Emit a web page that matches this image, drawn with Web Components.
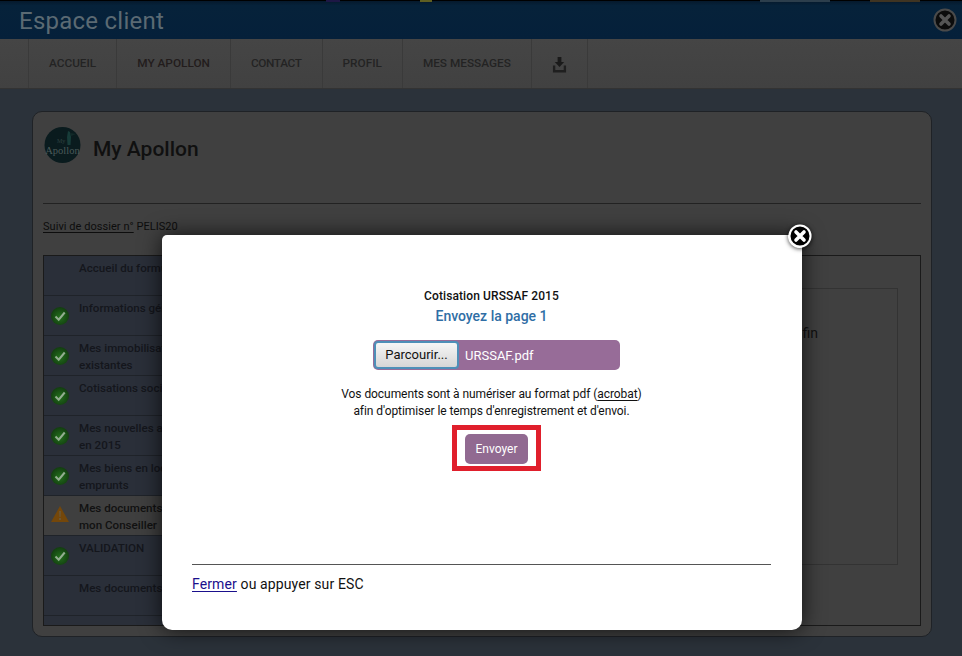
<!DOCTYPE html>
<html lang="fr">
<head>
<meta charset="utf-8">
<title>Espace client</title>
<style>
  html, body { margin: 0; height: 656px; overflow: hidden; }
  body { background: #2b323a; font: 12px/17px Roboto, "Liberation Sans", sans-serif; color: #111; position: relative; }
</style>
</head>
<body>
<client-header>Espace client</client-header>
<client-nav>
  <nav-item>ACCUEIL</nav-item>
  <nav-item active>MY APOLLON</nav-item>
  <nav-item style="letter-spacing:-.35px">CONTACT</nav-item>
  <nav-item>PROFIL</nav-item>
  <nav-item>MES MESSAGES</nav-item>
  <nav-item>
    <svg width="15" height="16" viewBox="0 0 16 16" preserveAspectRatio="none" style="display:block;margin-top:2px"><path d="M6 0h4v5h3l-5 5-5-5h3z" fill="#1a1a1a"/><path d="M1 8.500v7h14v-7h-2.500v4.500h-9v-4.500z" fill="#1f1f1f"/></svg>
  </nav-item>
</client-nav>
<apollon-card>
  <step-row>Accueil du formulaire</step-row>
  <step-row status="ok">Informations générales</step-row>
  <step-row status="ok">Mes immobilisations<br>existantes</step-row>
  <step-row status="ok">Cotisations sociales</step-row>
  <step-row status="ok">Mes nouvelles acquisitions<br>en 2015</step-row>
  <step-row status="ok">Mes biens en location<br>emprunts</step-row>
  <step-row status="warn">Mes documents pour<br>mon Conseiller</step-row>
  <step-row status="ok">VALIDATION</step-row>
  <step-row>Mes documents</step-row>
</apollon-card>
<upload-modal></upload-modal>

<script>
"use strict";

const closeIcon = (size, border, bg, cross) => `
  <svg width="${size}" height="${size}" viewBox="0 0 24 24" style="display:block">
    <circle cx="12" cy="12" r="10.5" fill="${bg}" stroke="${border}" stroke-width="2"/>
    <path d="M8 8l8 8M16 8l-8 8" stroke="${cross}" stroke-width="3.6" stroke-linecap="round"/>
  </svg>`;

class ClientHeader extends HTMLElement {
  constructor() {
    super();
    this.attachShadow({ mode: 'open' }).innerHTML = `
    <style>
      :host {
        display: flex;
        align-items: center;
        justify-content: space-between;
        box-sizing: border-box;
        height: 39px;
        padding: 0 5px 0 19px;
        background: linear-gradient(#05192c, #06223a 12%, #05203a);
        border-top: 1px solid #000;
        position: relative;
      }
      .title { font-size: 24px; line-height: 38px; padding-top: 2px; color: #5b6a73; letter-spacing: .25px; }
      .strip { position: absolute; top: -1px; height: 2px; }
    </style>
    <span class="strip" style="left:326px;width:14px;background:#1d1745"></span>
    <span class="strip" style="left:420px;width:12px;background:#5f5f22"></span>
    <span class="strip" style="left:760px;width:70px;background:#2c3e4c"></span>
    <span class="strip" style="left:870px;width:50px;background:#3f3422"></span>
    <span class="title"><slot></slot></span>
    ${closeIcon(24, '#4a4a4a', '#0c0c0c', '#555')}
    `;
  }
}
customElements.define('client-header', ClientHeader);

class ClientNav extends HTMLElement {
  constructor() {
    super();
    this.attachShadow({ mode: 'open' }).innerHTML = `
    <style>
      :host {
        display: flex;
        box-sizing: border-box;
        height: 50px;
        padding-left: 28px;
        background: linear-gradient(#454545, #414141);
        border-bottom: 1px solid #333;
      }
    </style>
    <slot></slot>
    `;
  }
}
customElements.define('client-nav', ClientNav);

class NavItem extends HTMLElement {
  constructor() {
    super();
    this.attachShadow({ mode: 'open' }).innerHTML = `
    <style>
      :host {
        display: flex;
        align-items: center;
        padding: 0 20px;
        font-size: 11.8px;
        font-weight: 500;
        color: #232323;
        border-left: 1px solid #3a3a3a;
      }
      :host([active]) { color: #221c1c; }
      :host(:last-child) { border-right: 1px solid #3a3a3a; }
    </style>
    <slot></slot>
    `;
  }
}
customElements.define('nav-item', NavItem);

class StepRow extends HTMLElement {
  constructor() {
    super();
    const status = this.getAttribute('status');
    let icon = '';
    if (status === 'ok') {
      icon = `<svg width="18" height="18" viewBox="0 0 18 18">
        <defs><radialGradient id="g" cx=".5" cy=".55" r=".6"><stop offset="0" stop-color="#246f1d"/><stop offset="1" stop-color="#10380e"/></radialGradient></defs>
        <circle cx="9" cy="9" r="9" fill="url(#g)"/>
        <path d="M4.500 9.500l3.200 3.200 6-7.200" fill="none" stroke="#93ad90" stroke-width="2"/>
      </svg>`;
    } else if (status === 'warn') {
      icon = `<svg width="18" height="16" viewBox="0 0 18 16">
        <path d="M9 0l9 16H0z" fill="#74470a"/>
        <path d="M8.200 5h1.600l-.3 6h-1zM8.200 12h1.600v2H8.200z" fill="#6b5a3c"/>
      </svg>`;
    }
    this.attachShadow({ mode: 'open' }).innerHTML = `
    <style>
      :host {
        display: grid;
        grid-template-columns: 35px 1fr;
        box-sizing: border-box;
        height: 40px;
        background: #2a2f39;
        border-bottom: 1px solid #1f2329;
        font-size: 11.6px;
        font-weight: 500;
        color: #14161c;
        white-space: nowrap;
        overflow: hidden;
      }
      :host([status="warn"]) { background: #3f3f3f; color: #111; }
      .icon { display: flex; align-items: flex-start; justify-content: center; padding-top: 11px; padding-right: 3px; }
      :host([status="warn"]) .icon { padding-top: 10px; }
      .label { padding-top: 4px; }
    </style>
    <div class="icon">${icon}</div>
    <div class="label"><slot></slot></div>
    `;
  }
}
customElements.define('step-row', StepRow);

class ApollonCard extends HTMLElement {
  constructor() {
    super();
    this.attachShadow({ mode: 'open' }).innerHTML = `
    <style>
      :host {
        display: block;
        box-sizing: border-box;
        height: 526px;
        margin: 22px 30px 0 32px;
        padding: 15px 10px 10px;
        background: #404040;
        border: 1px solid #1f2226;
        border-radius: 10px;
      }
      .head { display: flex; align-items: center; gap: 12px; height: 77px; box-sizing: border-box; padding: 0 0 41px 1px; border-bottom: 1px solid #222; }
      h1 { margin: 0; padding-top: 8px; font-size: 21px; line-height: 36px; font-weight: 500; color: #101010; }
      .ref { margin: 14px 0 20px; font-size: 11px; letter-spacing: .05px; line-height: 17px; height: 17px; color: #0d0d0d; }
      .ref u { text-underline-offset: 2px; }
      .box { display: flex; height: 371px; box-sizing: border-box; border: 1px solid #1a1a1a; }
      .steps { width: 240px; flex: none; background: #2a2f39; border-right: 1px solid #1f2329; }
      .pane { flex: 1; display: flex; padding: 32px 22px 60px 0; margin-left: 20px; }
      .inner { flex: 1; box-sizing: border-box; border: 1px solid #333; padding: 36px 79px 0 0; text-align: right; font-size: 14px; color: #111; }
    </style>
    <div class="head">
      <svg width="37" height="36" viewBox="0 0 37 36">
        <circle cx="18.500" cy="18" r="18" fill="#0a1b1e"/>
        <path d="M24 4l2 1 1 5-.5 8h-3l-.5-8z" fill="#173c39"/>
        <path d="M26 6l6 1-5 2z" fill="#122928"/>
        <text x="13" y="16" font-family="'Liberation Serif',serif" font-size="6" fill="#2f4241">My</text>
        <text x="18.500" y="27" font-family="'Liberation Serif',serif" font-size="10.500" fill="#4a5a59" text-anchor="middle">Apollon</text>
      </svg>
      <h1>My Apollon</h1>
    </div>
    <div class="ref"><u>Suivi de dossier n°</u> PELIS20</div>
    <div class="box">
      <div class="steps"><slot></slot></div>
      <div class="pane"><div class="inner">afin</div></div>
    </div>
    `;
  }
}
customElements.define('apollon-card', ApollonCard);

class UploadModal extends HTMLElement {
  constructor() {
    super();
    this.attachShadow({ mode: 'open' }).innerHTML = `
    <style>
      :host {
        display: flex;
        flex-direction: column;
        align-items: center;
        box-sizing: border-box;
        position: absolute;
        left: 162px;
        top: 235px;
        width: 640px;
        height: 395px;
        padding: 52px 31px 0 50px;
        background: #fff;
        border-radius: 5px 5px 10px 10px;
        box-shadow: 0 0 22px rgba(0,0,0,.75);
        color: #111;
        text-align: center;
      }
      .close { position: absolute; right: -10px; top: -11px; border-radius: 50%; box-shadow: 0 1px 4px rgba(0,0,0,.7); }
      .doc { font-weight: 500; line-height: 18px; letter-spacing: .1px; }
      .send { font-size: 14px; font-weight: 500; line-height: 20px; margin-top: 1px; color: #2f6ea5; }
      .file { display: flex; align-items: center; gap: 6px; box-sizing: border-box; width: 247px; height: 30px; margin: 14px 0 0 10px; padding-left: 1px; background: #976c98; border-radius: 5px; color: #fff; font-size: 13px; }
      .file span { box-sizing: border-box; width: 85px; height: 28px; line-height: 24px; text-align: center; color: #111; background: linear-gradient(#f6f6f6, #d6d6d6); border: 2px solid #4e8fb8; border-radius: 4px; }
      p { margin: 16px 0 5px; font-size: 12px; letter-spacing: -.07px; line-height: 17px; }
      p u { text-underline-offset: 2px; }
      .mark { display: flex; align-items: center; justify-content: center; box-sizing: border-box; width: 89px; height: 46px; margin: 0 0 0 10px; padding-top: 2px; border: 5px solid #e01f2c; }
      button { box-sizing: border-box; width: 63px; height: 30px; padding: 0; font: inherit; color: #fff; background: #916a91; border: 0; border-radius: 5px; }
      .foot { align-self: stretch; margin: auto 0 0 -20px; height: 66px; box-sizing: border-box; padding-top: 11px; border-top: 1px solid #555; text-align: left; font-size: 14px; letter-spacing: .12px; line-height: 17px; }
      .foot a { color: #1a0f8c; text-decoration: underline; text-underline-offset: 2px; }
    </style>
    <div class="close">${closeIcon(24, '#fff', '#000', '#fff')}</div>
    <div class="doc">Cotisation URSSAF 2015</div>
    <div class="send">Envoyez la page 1</div>
    <div class="file"><span>Parcourir...</span>URSSAF.pdf</div>
    <p>Vos documents sont à numériser au format pdf (<u>acrobat</u>)<br>afin d'optimiser le temps d'enregistrement et d'envoi.</p>
    <div class="mark"><button>Envoyer</button></div>
    <div class="foot"><a href="#">Fermer</a> ou appuyer sur ESC</div>
    `;
  }
}
customElements.define('upload-modal', UploadModal);
</script>
</body>
</html>
